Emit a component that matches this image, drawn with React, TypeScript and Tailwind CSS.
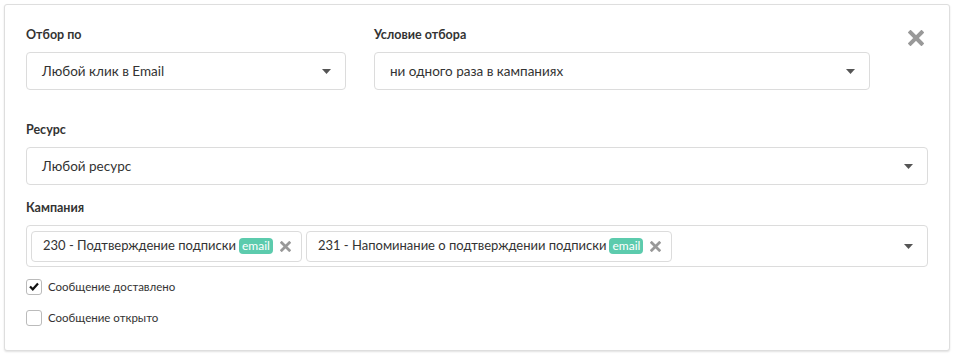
import React from 'react';

const font = { fontFamily: '"Source Sans Pro", Lato, "Liberation Sans", sans-serif' };

function Caret() {
  return (
    <svg width="9" height="5" viewBox="0 0 9 5" className="shrink-0">
      <path d="M0 0h9L4.5 5z" fill="#555" />
    </svg>
  );
}

function Times({ size = 10, color = '#999' }: { size?: number; color?: string }) {
  return (
    <svg width={size} height={size} viewBox="0 0 16 16">
      <path d="M2.5 2.5l11 11M13.5 2.5l-11 11" stroke={color} strokeWidth="4" strokeLinecap="square" />
    </svg>
  );
}

function Select({ value, className }: { value: string; className?: string }) {
  return (
    <div
      className={`flex h-[38px] items-center justify-between rounded border border-[#dcdcdc] bg-white pl-[15px] pr-[14px] text-[13.5px] text-[#333] ${className ?? ''}`}
    >
      <span>{value}</span>
      <Caret />
    </div>
  );
}

function Tag({ text }: { text: string }) {
  return (
    <div className="flex h-[31px] items-center rounded border border-[#dcdcdc] bg-white pl-[11px] pr-[10px] text-[13px] text-[#333]">
      <span>{text}</span>
      <span className="ml-[3px] rounded-[4px] bg-[#5ccbad] px-[3px] text-[12px] leading-[16px] text-white">email</span>
      <span className="ml-[7px] flex items-center">
        <Times size={11} />
      </span>
    </div>
  );
}

function Check({ checked, label }: { checked?: boolean; label: string }) {
  return (
    <label className="flex items-center gap-[6px] text-[11.5px] text-[#333]">
      <span className="flex h-[16px] w-[16px] items-center justify-center rounded-[3px] border border-[#bbb] bg-white">
        {checked && (
          <svg width="10" height="9" viewBox="0 0 10 9">
            <path d="M1 4.5l2.8 2.8L9 1.5" stroke="#111" strokeWidth="2.2" fill="none" />
          </svg>
        )}
      </span>
      {label}
    </label>
  );
}

export default function App() {
  return (
    <div className="min-h-screen bg-white p-[4px]" style={font}>
      <div className="relative rounded-[3px] border border-[#dedede] bg-white px-[21px] pt-[22px] pb-[23px] shadow-[0_1px_2px_rgba(0,0,0,0.12)]">
        {/* close */}
        <button className="absolute right-[25px] top-[25px]">
          <Times size={16} color="#999" />
        </button>

        <div className="flex gap-[28px]">
          <div className="w-[320px]">
            <div className="mb-[9px] text-[12.5px] font-bold leading-[16px] text-[#333]">Отбор по</div>
            <Select value="Любой клик в Email" />
          </div>
          <div className="w-[496px]">
            <div className="mb-[9px] text-[12.5px] font-bold leading-[16px] text-[#333]">Условие отбора</div>
            <Select value="ни одного раза в кампаниях" />
          </div>
        </div>

        <div className="mt-[32px] mb-[9px] text-[12.5px] font-bold leading-[16px] text-[#333]">Ресурс</div>
        <Select value="Любой ресурс" className="w-[902px]" />

        <div className="mt-[15px] mb-[9px] text-[12.5px] font-bold leading-[16px] text-[#333]">Кампания</div>
        <div className="flex h-[42px] w-[902px] items-center justify-between rounded border border-[#dcdcdc] bg-white pl-[4px] pr-[14px]">
          <div className="flex gap-[4px]">
            <Tag text="230 - Подтверждение подписки" />
            <Tag text="231 - Напоминание о подтверждении подписки" />
          </div>
          <Caret />
        </div>

        <div className="mt-[11px] flex flex-col gap-[14px]">
          <Check checked label="Сообщение доставлено" />
          <Check label="Сообщение открыто" />
        </div>
      </div>
    </div>
  );
}
